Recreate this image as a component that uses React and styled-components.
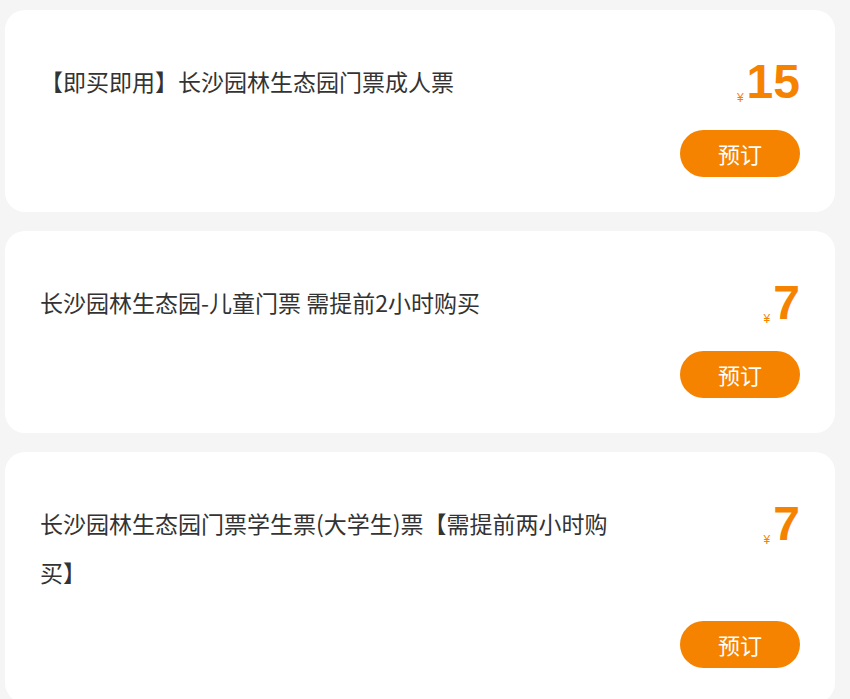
import React from "react";
import styled, { createGlobalStyle } from "styled-components";

const Global = createGlobalStyle`
  html, body { margin: 0; padding: 0; background: #f5f5f5; }
  body { font-family: "Noto Sans CJK SC", "Noto Sans", sans-serif; }
`;

const Page = styled.div`
  padding: 10px 15px 10px 5px;
  display: flex;
  flex-direction: column;
  gap: 19px;
`;

const Card = styled.div`
  background: #fff;
  border-radius: 20px;
  padding: 47px 35px 35px 35px;
  display: flex;
  flex-direction: column;
`;

const TopRow = styled.div`
  display: flex;
  justify-content: space-between;
  align-items: flex-start;
`;

const Title = styled.div`
  max-width: 572px;
  font-size: 23px;
  line-height: 49px;
  color: #333;
`;

const Price = styled.div`
  display: flex;
  align-items: baseline;
  height: 49px;
  line-height: 49px;
  color: #f58300;
  font-family: "Liberation Sans", Arial, sans-serif;
`;

const Yen = styled.span`
  font-size: 12px;
  margin-right: 3px;
  transform: translateY(4px);
`;

const Amount = styled.span`
  font-size: 48px;
  font-weight: 700;
`;

const ButtonRow = styled.div`
  display: flex;
  justify-content: flex-end;
  margin-top: 24px;
`;

const BookButton = styled.button`
  width: 120px;
  height: 47px;
  border: none;
  border-radius: 24px;
  background: #f58300;
  color: #fff;
  font-family: "Noto Sans CJK SC", sans-serif;
  font-size: 22px;
  line-height: 47px;
  padding: 0 0 2px;
  cursor: pointer;
`;

const items = [
  { title: "【即买即用】长沙园林生态园门票成人票", price: 15 },
  { title: "长沙园林生态园-儿童门票 需提前2小时购买", price: 7 },
  { title: "长沙园林生态园门票学生票(大学生)票【需提前两小时购买】", price: 7 },
];

export default function App() {
  return (
    <>
      <Global />
      <Page>
        {items.map((it, i) => (
          <Card key={i}>
            <TopRow>
              <Title>{it.title}</Title>
              <Price>
                <Yen>¥</Yen>
                <Amount>{it.price}</Amount>
              </Price>
            </TopRow>
            <ButtonRow>
              <BookButton>预订</BookButton>
            </ButtonRow>
          </Card>
        ))}
      </Page>
    </>
  );
}
